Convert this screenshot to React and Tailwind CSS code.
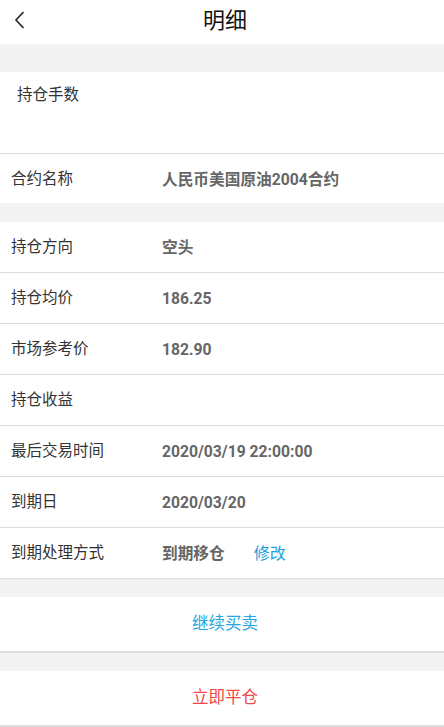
import React from 'react';

const ROWS = [
  { label: '持仓方向', value: '空头' },
  { label: '持仓均价', value: '186.25' },
  { label: '市场参考价', value: '182.90' },
  { label: '持仓收益', value: '' },
  { label: '最后交易时间', value: '2020/03/19 22:00:00' },
  { label: '到期日', value: '2020/03/20' },
  { label: '到期处理方式', value: '到期移仓', action: '修改' },
];

function Row({ label, value, action, border = true }) {
  return (
    <div className={`flex items-center h-[51px] bg-white pt-[2px] ${border ? 'border-b border-[#dcdce0]' : ''}`}>
      <div className="w-[162px] pl-[11px] text-[15.5px] text-[#333]">{label}</div>
      <div className="text-[15.7px] font-bold text-[#666]">{value}</div>
      {action && <div className="ml-[29px] text-[16px] text-[#1da1e2]">{action}</div>}
    </div>
  );
}

export default function App() {
  return (
    <div className="w-[444px] h-[727px] bg-[#f3f3f3] overflow-hidden" style={{ fontFamily: 'Roboto, "Noto Sans CJK SC", sans-serif' }}>
      {/* header */}
      <header className="relative h-[44px] bg-white flex items-center justify-center">
        <button className="absolute left-[13px] top-[10px] text-[#222]">
          <svg width="14" height="20" viewBox="0 0 14 20" fill="none" stroke="currentColor" strokeWidth="1.6">
            <path d="M10.5 2 L3 10 L10.5 18" />
          </svg>
        </button>
        <h1 className="text-[22px] text-[#111] pl-[6px] -mt-[4px]">明细</h1>
      </header>

      <div className="h-[28px]" />

      <div className="h-[82px] bg-white border-b border-[#dcdce0] pl-[17px] pt-[12px] text-[15.5px] text-[#333]">持仓手数</div>
      <div className="flex items-center h-[49px] bg-white pt-[2px]">
        <div className="w-[162px] pl-[11px] text-[15.5px] text-[#333]">合约名称</div>
        <div className="text-[15.7px] font-bold text-[#666]">人民币美国原油2004合约</div>
      </div>

      <div className="h-[19px]" />

      {ROWS.map((r) => (
        <Row key={r.label} {...r} />
      ))}

      <div className="h-[18px]" />
      <button className="w-full h-[56px] bg-white border-b-2 border-[#dcdce0] pl-[6px] text-[16.5px] text-[#25a5e2]">继续买卖</button>
      <div className="h-[18px]" />
      <button className="w-full h-[56px] bg-white border-b-2 border-[#dcdce0] pl-[6px] text-[16.5px] text-[#f04747]">立即平仓</button>
    </div>
  );
}
